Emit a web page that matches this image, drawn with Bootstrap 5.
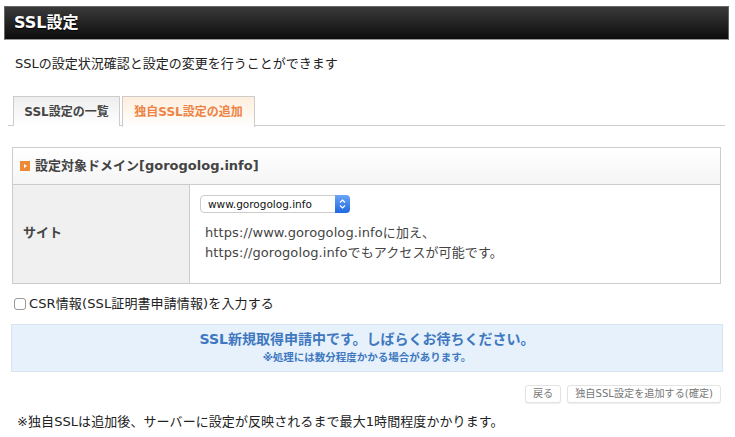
<!DOCTYPE html>
<html lang="ja"><head><meta charset="utf-8">
<link href="https://cdn.jsdelivr.net/npm/bootstrap@5.3.0/dist/css/bootstrap.min.css" rel="stylesheet">
<style>
html,body{margin:0;background:#fff;}
body{width:735px;height:437px;overflow:hidden;font-family:"DejaVu Sans","Noto Sans CJK JP",sans-serif;font-size:13px;color:#222;line-height:20px;}
.pagehead{margin:6px 6px 0 4px;height:34px;background:linear-gradient(#3a3a3a,#0c0c0c);border:1px solid #666;border-bottom-color:#999;color:#fff;font-size:16px;font-weight:700;padding-left:9px;line-height:32px;text-shadow:0 1px 1px #000;}
.intro{margin:14px 0 0 15px;height:20px;}
.tabrow{margin:22px 10px 0 8px;height:30px;border-bottom:1px solid #ccc;padding-left:5px;}
.tabitem{height:30px;border:1px solid #ccc;border-bottom:0;font-size:12px;font-weight:700;line-height:30px;text-align:center;}
.tabitem.one{width:107px;background:linear-gradient(#eee,#fff);color:#444;}
.tabitem.two{width:133px;background:linear-gradient(#fdeedd,#fff);color:#ee8344;height:31px;margin-left:2px;background-color:#fff;}
.settbl{margin:21px 14px 0 12px;border:1px solid #ccc;height:137px;}
.sethead{height:37px;border-bottom:1px solid #ccc;background:linear-gradient(#fff,#f5f5f5);font-size:13px;font-weight:700;color:#444;padding-left:7px;gap:5px;}
.marker{width:10px;height:10px;background:#ee8a35;display:block;flex:none;}
.setbody{height:98px;}
.sitecell{width:177px;background:#f0f0f0;border-right:1px solid #ccc;font-weight:700;color:#444;padding-left:10px;padding-bottom:3px;}
.valcell{padding:10px 0 0 10px;}
.selbox{width:150px;height:18px;border:1px solid #ccc;border-radius:4px;font-size:10.5px;line-height:16px;padding-left:7px;color:#111;background:#fff;position:relative;overflow:visible;}
.selarrow{position:absolute;right:-1px;top:-1px;width:15px;height:18px;background:linear-gradient(#6aa5f5,#1e68e0);border-radius:0 4px 4px 0;}
.urls{margin:10px 0 0 5px;color:#444;line-height:20px;letter-spacing:.1px;}
.csr{margin:10px 0 0 14px;height:20px;gap:3px;letter-spacing:.12px;}
.csrbox{width:12px;height:12px;border:1px solid #999;border-radius:3px;background:#fff;flex:none;margin:0;}
.notice{margin:10px 12px 0 11px;height:48px;background:#e6f1fc;border:1px solid #d6e5f3;text-align:center;color:#3f78bf;font-weight:700;padding-top:4px;}
.noticemain{font-size:14px;line-height:20px;}
.noticesub{font-size:10.5px;line-height:14px;margin-top:1px;}
.btnrow{margin:13px 14px 0 0;gap:6px;}
.ghost{height:18px;border:1px solid #e3e3e3;border-radius:3px;font-size:10.15px;line-height:16px;color:#777;background:#fff;padding:0 7px;box-shadow:0 1px 1px #eee;}
.foot{margin:9px 0 0 17px;color:#222;letter-spacing:.08px;}
</style></head><body>
<div class="pagehead">SSL設定</div>
<div class="intro">SSLの設定状況確認と設定の変更を行うことができます</div>
<div class="tabrow d-flex">
<div class="tabitem one">SSL設定の一覧</div>
<div class="tabitem two">独自SSL設定の追加</div>
</div>
<div class="settbl">
<div class="sethead d-flex align-items-center"><svg class="marker" viewBox="0 0 10 10"><rect width="10" height="10" fill="#ee8a35"/><path d="M4 3l3 2-3 2z" fill="#fff"/></svg><span>設定対象ドメイン[gorogolog.info]</span></div>
<div class="setbody d-flex">
<div class="sitecell d-flex align-items-center">サイト</div>
<div class="valcell flex-grow-1">
<div class="selbox">www.gorogolog.info<span class="selarrow"><svg width="15" height="18" viewBox="0 0 15 18"><path d="M5 7.5l2.5-2.5 2.5 2.5M5 10.5l2.5 2.5 2.5-2.5" fill="none" stroke="#fff" stroke-width="1.2"/></svg></span></div>
<div class="urls">https://www.gorogolog.infoに加え、<br>https://gorogolog.infoでもアクセスが可能です。</div>
</div></div></div>
<div class="csr d-flex align-items-center"><span class="csrbox"></span><span>CSR情報(SSL証明書申請情報)を入力する</span></div>
<div class="notice"><div class="noticemain">SSL新規取得申請中です。しばらくお待ちください。</div><div class="noticesub">※処理には数分程度かかる場合があります。</div></div>
<div class="btnrow d-flex justify-content-end"><span class="ghost">戻る</span><span class="ghost">独自SSL設定を追加する(確定)</span></div>
<div class="foot">※独自SSLは追加後、サーバーに設定が反映されるまで最大1時間程度かかります。</div>
</body></html>
